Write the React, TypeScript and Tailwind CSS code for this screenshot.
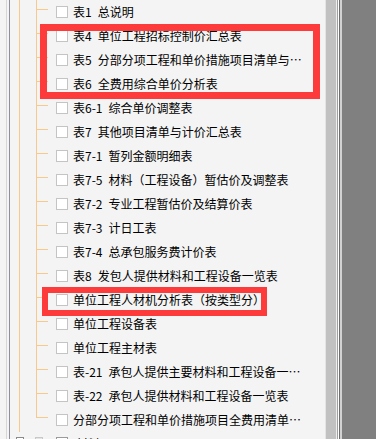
const rows = [
  "表1 总说明",
  "表4 单位工程招标控制价汇总表",
  "表5 分部分项工程和单价措施项目清单与…",
  "表6 全费用综合单价分析表",
  "表6-1 综合单价调整表",
  "表7 其他项目清单与计价汇总表",
  "表7-1 暂列金额明细表",
  "表7-5 材料（工程设备）暂估价及调整表",
  "表7-2 专业工程暂估价及结算价表",
  "表7-3 计日工表",
  "表7-4 总承包服务费计价表",
  "表8 发包人提供材料和工程设备一览表",
  "单位工程人材机分析表（按类型分）",
  "单位工程设备表",
  "单位工程主材表",
  "表-21 承包人提供主要材料和工程设备一…",
  "表-22 承包人提供材料和工程设备一览表",
  "分部分项工程和单价措施项目全费用清单…",
]

function TreeRow({ label, last }: { label: string; last: boolean }) {
  const sp = label.indexOf(" ")
  const code = sp > 0 ? label.slice(0, sp) : ""
  const name = sp > 0 ? label.slice(sp + 1) : label
  return (
    <div className="flex h-6">
      {/* connector */}
      <div className="ml-[16px] flex w-[12px] flex-col">
        <div className="h-[10px] border-b border-l border-[#f8c98c]" />
        {!last && <div className="flex-1 border-l border-[#f8c98c]" />}
      </div>
      <div className="ml-[8px] mt-[6px] h-[12px] w-[12px] border border-[#c4c4c4] bg-white" />
      <div className="ml-[5px] flex whitespace-nowrap text-[12px] leading-[23px] text-black">
        {code && <span className="mr-[6px]">{code}</span>}
        <span>{name}</span>
      </div>
    </div>
  )
}

export default function App() {
  return (
    <div
      className="flex h-[439px] w-[376px] overflow-hidden bg-[#808080]"
      style={{ fontFamily: '"Noto Sans CJK SC", "Liberation Sans", sans-serif' }}
    >
      {/* tree panel */}
      <div className="relative h-full w-[325px] bg-[#f4f4f4]">
        <div className="h-full pl-[6px]">
          <div className="h-full border-l border-[#d6d6d6] pl-[2px]">
            <div className="h-full border-l border-[#8e8e9e]">
              <div className="ml-[9px] border-l border-[#f8c98c]">
                {rows.map((r, i) => (
                  <TreeRow key={i} label={r} last={i === rows.length - 1} />
                ))}
              </div>
              {/* partially visible next node */}
              <div className="flex h-6 items-start">
                <div className="ml-[6px] mt-[5px] h-[8px] w-[8px] border border-[#8a8a8a] bg-white" />
                <div className="ml-[11px] mt-[5px] h-[8px] w-[8px] border border-[#c8c8c8] bg-[#e4e4e4]" />
                <div className="ml-[13px] mt-[5px] h-[12px] w-[12px] border border-[#9a9a9a] bg-white" />
                <div className="ml-[8px] text-[12px] leading-[23px] text-black">材料</div>
              </div>
            </div>
          </div>
        </div>

        {/* red annotation boxes */}
        <div className="absolute left-[40px] top-[24px] h-[75px] w-[280px] border-[7px] border-[#fe3b3b]" />
        <div className="absolute left-[42px] top-[287px] h-[29px] w-[225px] border-[6px] border-[#fe3b3b]" />
      </div>

      {/* scrollbar + splitter */}
      <div className="h-full w-[1px] bg-[#e4e4e4]" />
      <div className="h-full w-[10px] bg-[#c1c1c1]" />
      <div className="h-full w-[1px] bg-[#eeeeee]" />
      <div className="h-full w-[1px] bg-[#a0a0a0]" />
      <div className="h-full w-[1px] bg-white" />
      <div className="h-full w-[1px] bg-[#6e6e6e]" />
      <div className="h-full w-[2px] bg-[#d2d2d2]" />
      <div className="h-full flex-1 bg-[#808080]" />
    </div>
  )
}
